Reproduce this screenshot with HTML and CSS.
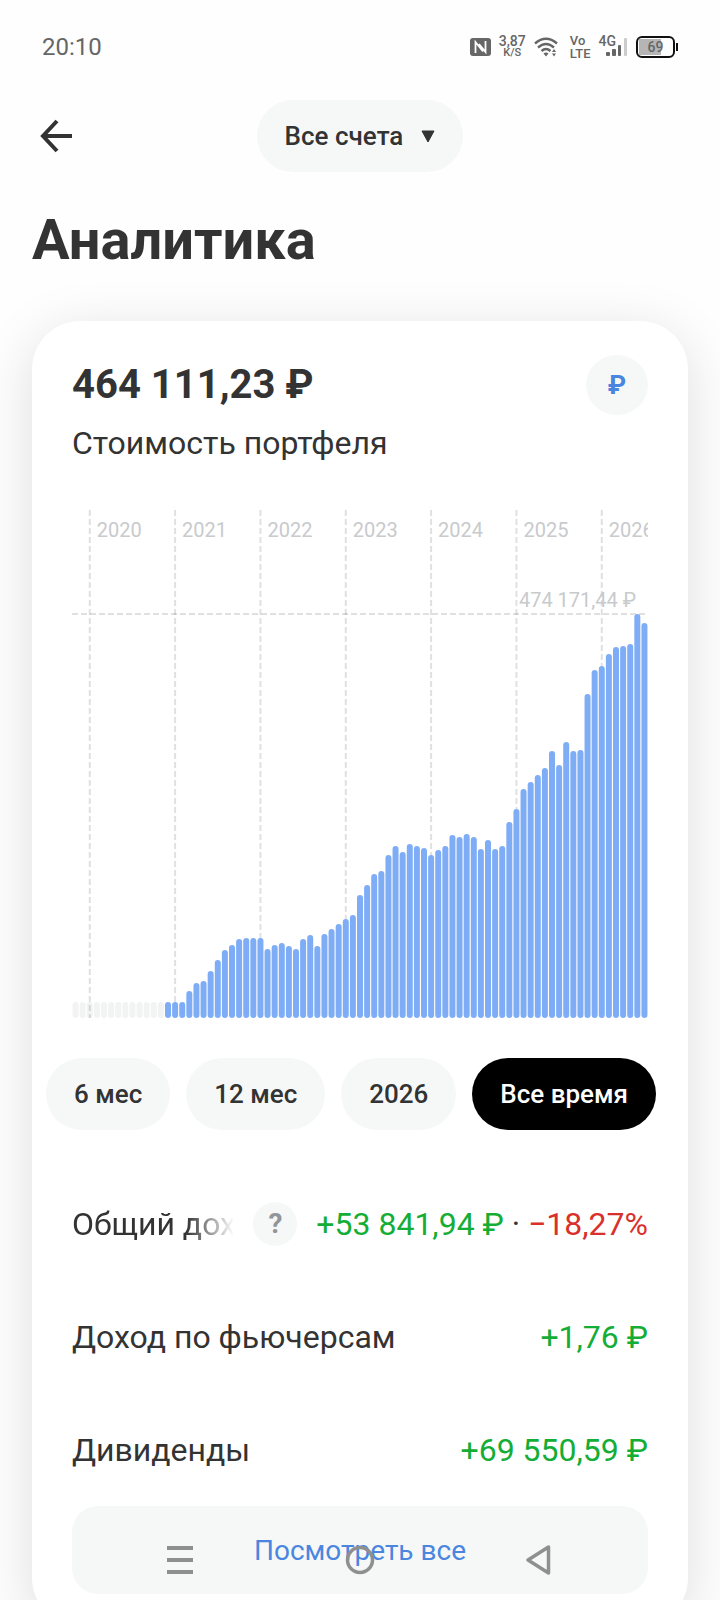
FILE: index.html
```html
<!DOCTYPE html>
<html lang="ru">
<head>
    <meta charset="UTF-8">
    <meta name="viewport" content="width=device-width, initial-scale=1.0">
    <title>Аналитика</title>
    <link rel="stylesheet" href="styles.css">
</head>
<body>
    <div class="screen">
        <div class="status-bar">
            <span class="time">20:10</span>
            <div class="status-icons">
                <svg class="icon-nfc" width="21" height="18" viewBox="0 0 21 18">
                    <rect width="21" height="18" rx="3" fill="#666"/>
                    <path d="M5.500 15V4l7.500 9.500M15.500 3v11L9 6" fill="none" stroke="#fff" stroke-width="1.800"/>
                </svg>
                <div class="stack speed"><span>3,87</span><small>K/S</small></div>
                <svg class="icon-wifi" width="24" height="20" viewBox="0 0 24 20">
                    <g fill="none" stroke="#666" stroke-width="2.400">
                        <path d="M1 6.500Q12 -3 23 6.500"/>
                        <path d="M4 10.500Q12 3.500 20 10.500"/>
                        <path d="M7.500 14Q12 10 16.500 14"/>
                    </g>
                    <path d="M9.500 16.500Q12 14.500 14.500 16.500L12 19.500z" fill="#666"/>
                    <path d="M18 15l2-3 2 3zM18 16.500h4l-2 3z" fill="#666"/>
                </svg>
                <div class="stack volte"><span>Vo</span><span>LTE</span></div>
                <div class="signal">
                    <span>4G</span>
                    <svg width="22" height="20" viewBox="0 0 22 20">
                        <g fill="#666">
                            <rect x="0" y="15" width="4" height="4" rx="1"/>
                            <rect x="6" y="12" width="4" height="7" rx="1"/>
                            <rect x="12" y="8" width="3" height="11" rx="1"/>
                        </g>
                        <rect x="18" y="1" width="3" height="18" rx="1" fill="#ccc"/>
                    </svg>
                </div>
                <div class="battery"><span>69</span></div>
            </div>
        </div>

        <header class="header">
            <button class="back" aria-label="Назад">
                <svg width="32" height="34" viewBox="0 0 32 34" fill="none" stroke="#333" stroke-width="4">
                    <path d="M32 17H3M17 2L3 17l14 15"/>
                </svg>
            </button>
            <button class="accounts">
                Все счета
                <svg width="14" height="13" viewBox="0 0 14 13"><path d="M1 1h12L7 12z" fill="#333" stroke="#333" stroke-linejoin="round"/></svg>
            </button>
        </header>

        <h1>Аналитика</h1>

        <main class="card">
            <div class="card-head">
                <div>
                    <div class="amount">464 111,23 ₽</div>
                    <div class="caption">Стоимость портфеля</div>
                </div>
                <button class="currency">₽</button>
            </div>

            <svg id="chart" class="chart" viewBox="0 0 576 508"></svg>

            <div class="periods">
                <button>6 мес</button>
                <button>12 мес</button>
                <button>2026</button>
                <button class="active">Все время</button>
            </div>

            <dl class="totals">
                <div class="row">
                    <dt class="fade">Общий доход</dt>
                    <dd class="hint"><button aria-label="Подсказка">?</button></dd>
                    <dd><span class="plus">+53 841,94 ₽</span> · <span class="minus">−18,27%</span></dd>
                </div>
                <div class="row">
                    <dt>Доход по фьючерсам</dt>
                    <dd class="plus">+1,76 ₽</dd>
                </div>
                <div class="row">
                    <dt>Дивиденды</dt>
                    <dd class="plus">+69 550,59 ₽</dd>
                </div>
            </dl>

            <button class="show-all">Посмотреть все</button>
        </main>
    </div>

    <nav class="nav-bar">
        <button aria-label="Меню">
            <svg width="32" height="32" viewBox="0 0 32 32"><path d="M3 4h26M3 16h26M3 28h26" stroke="#8f8f8f" stroke-width="4"/></svg>
        </button>
        <button aria-label="Домой">
            <svg width="32" height="32" viewBox="0 0 32 32"><circle cx="16" cy="16" r="12.500" fill="none" stroke="#8f8f8f" stroke-width="3.500"/></svg>
        </button>
        <button aria-label="Назад">
            <svg width="32" height="32" viewBox="0 0 32 32"><path d="M24.500 3v26L4 16z" fill="none" stroke="#8f8f8f" stroke-width="3.500" stroke-linejoin="round"/></svg>
        </button>
    </nav>

    <script src="chart.js"></script>
</body>
</html>
```
FILE: styles.css
```css
* {
    box-sizing: border-box;
}
body {
    margin: 0;
    background: #fefefe;
    color: #333;
    font-family: Roboto, 'Noto Sans', sans-serif;
}
button {
    border: none;
    padding: 0;
    background: none;
    color: inherit;
    font: inherit;
    cursor: pointer;
}
svg {
    display: block;
}
.screen {
    height: 100vh;
    overflow: hidden;
}

/* status bar */
.status-bar {
    display: flex;
    align-items: center;
    justify-content: space-between;
    height: 94px;
    padding: 0 42px;
    color: #666;
}
.time {
    font-size: 24px;
}
.status-icons {
    display: flex;
    align-items: center;
    gap: 8px;
    font-weight: 500;
}
.stack {
    display: flex;
    flex-direction: column;
    font-size: 14px;
    line-height: 12px;
}
.speed {
    align-items: center;
}
.speed small {
    font-size: 11px;
    line-height: 12px;
}
.volte {
    margin-left: 4px;
    font-size: 13px;
    line-height: 13px;
}
.signal {
    display: flex;
    align-items: flex-start;
    font-size: 14px;
    line-height: 9px;
}
.signal svg {
    margin-left: -10px;
}
.battery {
    position: relative;
    display: flex;
    align-items: center;
    justify-content: center;
    width: 39px;
    height: 22px;
    margin-right: 3px;
    border: 2px solid #111;
    border-radius: 6px;
    background: linear-gradient(#b5b5b5, #b5b5b5) 1px 1px / 22px 16px no-repeat;
    font-size: 14px;
}
.battery::after {
    content: '';
    position: absolute;
    right: -5px;
    top: 5px;
    width: 2px;
    height: 8px;
    background: #111;
}

/* header */
.header {
    display: grid;
    grid-template-columns: 1fr auto 1fr;
    align-items: center;
    padding: 6px 40px 0;
}
.back {
    justify-self: start;
}
.accounts {
    display: flex;
    align-items: center;
    gap: 18px;
    height: 72px;
    padding: 0 28px;
    border-radius: 36px;
    background: #f6f8f8;
    font-size: 26px;
    font-weight: 500;
}
h1 {
    margin: 36px 32px 49px;
    font-size: 56px;
    line-height: 64px;
    font-weight: 700;
}

/* card */
.card {
    margin: 0 32px;
    padding: 34px 40px 32px;
    border-radius: 48px;
    background: #fff;
    box-shadow: 0 12px 56px rgba(0, 0, 0, 0.13);
}
.card-head {
    display: flex;
    align-items: flex-start;
    justify-content: space-between;
}
.amount {
    margin-top: 6px;
    font-size: 40px;
    line-height: 48px;
    font-weight: 700;
}
.caption {
    margin-top: 14px;
    font-size: 32px;
    line-height: 40px;
}
.currency {
    width: 62px;
    height: 60px;
    border-radius: 50%;
    background: #f6f8f8;
    color: #4a86e0;
    font-size: 26px;
    font-weight: 700;
}

/* chart */
.chart {
    width: 100%;
    height: auto;
    margin-top: 47px;
    font-size: 20px;
}
.chart text {
    fill: #c8cacc;
}
.chart line {
    stroke: rgba(0, 0, 0, 0.12);
    stroke-width: 2;
    stroke-dasharray: 6 3;
}
.chart .bar {
    fill: #7eadf6;
}
.chart .empty {
    fill: rgba(0, 20, 20, 0.05);
}

/* periods */
.periods {
    display: flex;
    justify-content: flex-end;
    gap: 16px;
    margin: 40px -8px 37px -40px;
}
.periods button {
    height: 72px;
    padding: 0 28px;
    border-radius: 36px;
    background: #f6f8f8;
    font-size: 26px;
    font-weight: 500;
    white-space: nowrap;
}
.periods .active {
    background: #000;
    color: #fff;
}

/* totals */
.totals {
    margin: 0;
    font-size: 32px;
}
.row {
    display: flex;
    align-items: center;
    height: 113px;
    gap: 19px;
    white-space: nowrap;
}
.row dt {
    flex: 1;
    min-width: 0;
    overflow: hidden;
}
.row dd {
    margin: 0;
}
.fade {
    -webkit-mask-image: linear-gradient(to left, transparent, #000 48px);
    mask-image: linear-gradient(to left, transparent, #000 48px);
}
.hint button {
    display: block;
    width: 44px;
    height: 44px;
    border-radius: 50%;
    background: #f6f8f8;
    color: #929599;
    font-size: 28px;
    font-weight: 700;
}
.plus {
    color: #14ad36;
}
.minus {
    color: #d9302c;
}
.show-all {
    display: block;
    width: 100%;
    height: 88px;
    border-radius: 26px;
    background: #f6f8f8;
    color: #4a86e0;
    font-size: 28px;
}

/* system navigation over the page */
.nav-bar {
    position: fixed;
    left: 0;
    right: 0;
    bottom: 0;
    display: flex;
    justify-content: center;
    gap: 148px;
    padding-bottom: 24px;
}
```
FILE: chart.js
```javascript
const svg = document.getElementById('chart');

const WIDTH = 576;
const HEIGHT = 508;
const MAX_HEIGHT = 404;
const EMPTY_MONTHS = 13;

// bar heights by month, the first 13 months have no data
const values = [
    16, 16, 16, 16, 16, 16, 16, 16, 16, 16, 16, 16, 16,
    16, 16, 16, 27, 35, 37, 47, 58, 68, 73, 79, 80, 80,
    80, 69, 73, 75, 72, 69, 79, 83, 72, 84, 89, 94,
    99, 103, 123, 133, 144, 147, 163, 172, 166, 174, 172, 170,
    163, 168, 172, 183, 181, 184, 181, 169, 178, 169, 172, 196,
    209, 229, 236, 243, 250, 267, 253, 276, 267, 268, 324, 348,
    352, 364, 371, 372, 374, 404, 395
];
const step = WIDTH / values.length;

function add(name, attrs, text) {
    const el = document.createElementNS('http://www.w3.org/2000/svg', name);
    for (const key in attrs) {
        el.setAttribute(key, attrs[key]);
    }
    if (text) el.textContent = text;
    svg.appendChild(el);
}

// years
for (let i = 0; i < 7; i++) {
    const x = (2.5 + i * 12) * step;
    add('line', { x1: x, x2: x, y1: 0, y2: HEIGHT });
    add('text', { x: x + 7, y: 27 }, String(2020 + i));
}

// maximum
const maxY = HEIGHT - MAX_HEIGHT;
add('line', { x1: 0, x2: WIDTH, y1: maxY, y2: maxY });
add('text', { x: WIDTH - 12, y: maxY - 7, 'text-anchor': 'end' }, '474 171,44 ₽');

values.forEach((value, i) => {
    add('rect', {
        class: i < EMPTY_MONTHS ? 'empty' : 'bar',
        x: i * step + (step - 6) / 2,
        y: HEIGHT - value,
        width: 6,
        height: value,
        rx: 3
    });
});
```
